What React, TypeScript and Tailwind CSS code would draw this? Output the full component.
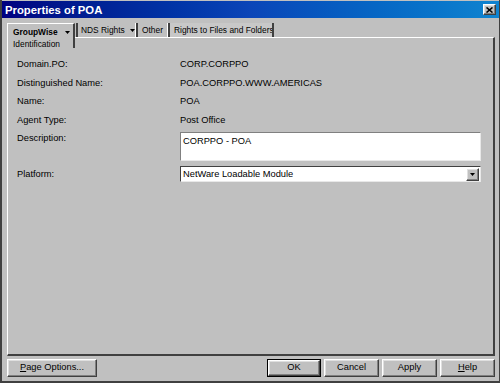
import React from "react";

const Tri = ({ w = 7, h = 4 }: { w?: number; h?: number }) => (
  <svg width={w} height={h} viewBox={`0 0 ${w} ${h}`} className="inline-block flex-none">
    <path d={`M0 0 H${w} L${w / 2} ${h} Z`} fill="#000" />
  </svg>
);

const bevel =
  "border border-t-white border-l-white border-r-[#404040] border-b-[#404040] shadow-[inset_-1px_-1px_0_#808080,inset_1px_1px_0_#dfdfdf]";

function Btn({ children, w, def }: { children: React.ReactNode; w: string; def?: boolean }) {
  if (def) {
    return (
      <div className={`${w} h-[18px] border border-black flex`}>
        <div className={`flex-1 ${bevel} flex items-center justify-center`}>{children}</div>
      </div>
    );
  }
  return <div className={`${w} h-[18px] ${bevel} flex items-center justify-center`}>{children}</div>;
}

function Row({ label, value }: { label: string; value: string }) {
  return (
    <div className="h-[18.5px] flex">
      <div className="w-[163px] leading-[12px]">{label}</div>
      <div className="leading-[12px]">{value}</div>
    </div>
  );
}

export default function App() {
  return (
    <div className="w-[500px] h-[383px] bg-[#c0c0c0] flex flex-col border-l-2 border-r border-b-2 border-[#404040] font-['Liberation_Sans',Arial,sans-serif] text-[9.3px] text-black overflow-hidden whitespace-nowrap">
      {/* Title bar */}
      <div className="h-[17px] mt-px flex items-center justify-between pl-[3px] pr-[3px] bg-gradient-to-r from-[#000080] via-[#0b45b8] to-[#1084d0]">
        <span className="text-white font-bold text-[11.3px] leading-[14px]">Properties of POA</span>
        <div className={`w-[13px] h-[11px] ${bevel} bg-[#c0c0c0] flex items-center justify-center`}>
          <svg width="7" height="6" viewBox="0 0 7 6">
            <path d="M0.5 0.5 L6.5 5.5 M6.5 0.5 L0.5 5.5" stroke="#000" strokeWidth="1.6" />
          </svg>
        </div>
      </div>

      {/* Panel area */}
      <div className="flex-1 flex flex-col pl-[5px] pr-[4px] pt-[5px]">
        <div className="flex-1 flex flex-col">
          {/* Header row with tabs */}
          <div className="flex text-[8.4px]">
            <div className="w-[68px] flex-none h-[25px] border-t border-l border-white border-r-2 border-r-[#404040] pl-[5px] pt-[2px]">
              <div className="flex items-center gap-[7px] font-bold leading-[12px]">
                GroupWise <Tri w={5} h={3} />
              </div>
              <div className="leading-[11px] mt-[1px]">Identification</div>
            </div>
            <div className="flex-1 flex flex-col">
              <div className="h-[14px] flex pl-[1px]">
                <div className="w-[60px] flex-none h-[14px] border-l-2 border-l-[#404040] pl-[3px] flex items-center gap-[5px] leading-[12px] border-r border-r-white overflow-hidden">
                  NDS Rights <Tri w={5} h={3} />
                </div>
                <div className="w-[32px] flex-none h-[14px] border-l-2 border-l-[#404040] pl-[4px] flex items-center leading-[12px] border-r border-r-white overflow-hidden">
                  Other
                </div>
                <div className="w-[106px] flex-none h-[14px] border-l-2 border-l-[#404040] pl-[4px] flex items-center leading-[12px] border-r-2 border-r-[#404040] bg-[#c8c8c8] overflow-hidden">
                  Rights to Files and Folders
                </div>
              </div>
              <div className="flex-1 border-t border-white border-r-2 border-r-[#404040]" />
            </div>
          </div>

          {/* Body */}
          <div className="flex-1 border-l border-white border-r-2 border-r-[#404040] border-b-2 border-b-[#404040] pl-[9px] pt-[10px] pr-[12px]">
            <Row label="Domain.PO:" value="CORP.CORPPO" />
            <Row label="Distinguished Name:" value="POA.CORPPO.WWW.AMERICAS" />
            <Row label="Name:" value="POA" />
            <Row label="Agent Type:" value="Post Office" />
            <div className="flex">
              <div className="w-[163px] leading-[12px]">Description:</div>
              <div className="flex-1 h-[29px] bg-white border border-t-[#808080] border-l-[#808080] border-r-[#e8e8e8] border-b-[#e8e8e8] pl-[2px] pt-[2px] leading-[12px]">
                CORPPO - POA
              </div>
            </div>
            <div className="flex items-center mt-[5px]">
              <div className="w-[163px] leading-[12px]">Platform:</div>
              <div className="flex-1 h-[16px] bg-white border border-t-[#404040] border-l-[#404040] border-r-[#e8e8e8] border-b-[#e8e8e8] flex items-center pl-[2px]">
                <span className="flex-1 leading-[12px]">NetWare Loadable Module</span>
                <div className={`w-[13px] h-[13px] ${bevel} bg-[#c0c0c0] flex items-center justify-center mr-px`}>
                  <Tri w={5} h={3} />
                </div>
              </div>
            </div>
          </div>
        </div>

        {/* Buttons */}
        <div className="h-[25px] flex items-center pb-[1px]">
          <Btn w="w-[90px]">
            <span>
              <span className="underline">P</span>age Options...
            </span>
          </Btn>
          <div className="flex-1" />
          <div className="flex gap-[3px]">
            <Btn w="w-[54px]" def>
              OK
            </Btn>
            <Btn w="w-[55px]">Cancel</Btn>
            <Btn w="w-[55px]">Apply</Btn>
            <Btn w="w-[55px]">
              <span>
                <span className="underline">H</span>elp
              </span>
            </Btn>
          </div>
        </div>
      </div>
    </div>
  );
}
